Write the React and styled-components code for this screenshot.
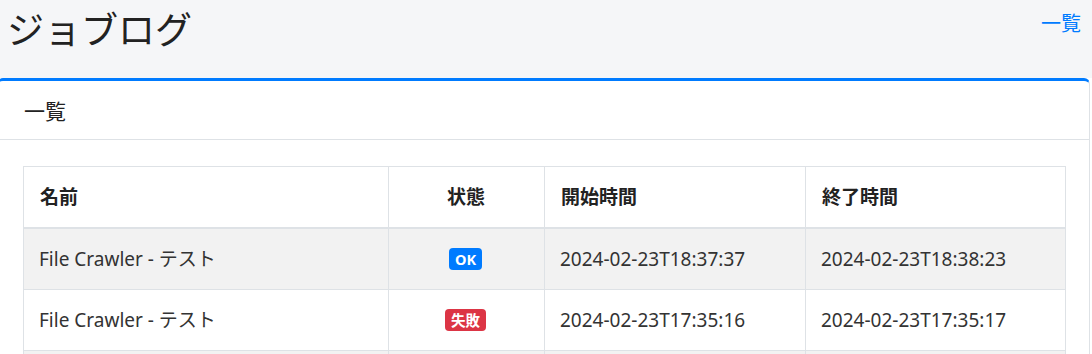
import React from 'react';
import styled, { createGlobalStyle } from 'styled-components';

const GlobalStyle = createGlobalStyle`
    html, body {
        margin: 0;
        padding: 0;
        background: #ffffff;
        font-family: "Noto Sans", "Noto Sans CJK JP", sans-serif;
        color: #212529;
        overflow: hidden;
    }
`;

const Header = styled.header`
    display: flex;
    align-items: flex-start;
    justify-content: space-between;
    height: 78px;
    padding: 0 11px 0 7px;
    box-sizing: border-box;
    background-color: #f5f6f8;
`;

const Title = styled.h1`
    margin: 0;
    padding-top: 2px;
    font-family: "Noto Sans CJK JP", sans-serif;
    font-size: 37px;
    font-weight: 400;
    line-height: 52px;
    color: #222;
`;

const NavLink = styled.a`
    margin-top: 9px;
    font-family: "Noto Sans CJK JP", sans-serif;
    font-size: 20px;
    line-height: 28px;
    color: #007bff;
    text-decoration: none;
`;

const Card = styled.section`
    margin-left: -1px;
    width: 1091px;
    border: 1px solid #dee2e6;
    border-top: 3px solid #007bff;
    border-radius: 4px 6px 0 0;
    background: #fff;
    box-sizing: border-box;
`;

const CardHeader = styled.div`
    height: 58px;
    padding: 0 24px;
    display: flex;
    align-items: center;
    border-bottom: 1px solid #dee2e6;
    font-family: "Noto Sans CJK JP", sans-serif;
    font-size: 21px;
    color: #222;
`;

const CardBody = styled.div`
    padding: 26px 24px 24px 23px;
`;

const Table = styled.table`
    width: 1042px;
    table-layout: fixed;
    border-collapse: collapse;
    font-size: 19px;
`;

const Th = styled.th`
    padding: 16px 17px 16px 16px;
    line-height: 28px;
    border: 1px solid #dee2e6;
    border-bottom-width: 2px;
    font-weight: 700;
    text-align: ${p => p.$center ? 'center' : 'left'};
    color: #222;
`;

const Row = styled.tr`
    background: ${p => p.$striped ? '#f2f2f2' : '#fff'};
`;

const Td = styled.td`
    padding: 16px 17px 16px 15px;
    line-height: 28px;
    border: 1px solid #dee2e6;
    text-align: ${p => p.$center ? 'center' : 'left'};
    color: #333;
    white-space: nowrap;
`;

const Badge = styled.span`
    display: inline-block;
    padding: 3px 6px;
    font-size: 14.5px;
    font-weight: 700;
    line-height: 16px;
    color: #fff;
    border-radius: 4px;
    vertical-align: 1px;
    background-color: ${p => p.$tone === 'danger' ? '#dc3545' : '#007bff'};
`;

const logs = [
    { name: 'File Crawler - テスト', ok: true, start: '2024-02-23T18:37:37', end: '2024-02-23T18:38:23' },
    { name: 'File Crawler - テスト', ok: false, start: '2024-02-23T17:35:16', end: '2024-02-23T17:35:17' },
    { name: 'File Crawler - テスト', ok: true, start: '2024-02-23T16:12:02', end: '2024-02-23T16:12:40' },
];

export default function App() {
    return (
        <>
            <GlobalStyle />
            <Header>
                <Title>ジョブログ</Title>
                <NavLink href="#">一覧</NavLink>
            </Header>
            <Card>
                <CardHeader>一覧</CardHeader>
                <CardBody>
                    <Table>
                        <colgroup>
                            <col style={{ width: 365 }} />
                            <col style={{ width: 156 }} />
                            <col style={{ width: 261 }} />
                            <col style={{ width: 260 }} />
                        </colgroup>
                        <thead>
                            <tr>
                                <Th>名前</Th>
                                <Th $center>状態</Th>
                                <Th>開始時間</Th>
                                <Th>終了時間</Th>
                            </tr>
                        </thead>
                        <tbody>
                            {logs.map((log, i) => (
                                <Row key={i} $striped={i % 2 === 0}>
                                    <Td>{log.name}</Td>
                                    <Td $center>
                                        {log.ok
                                            ? <Badge>OK</Badge>
                                            : <Badge $tone="danger">失敗</Badge>}
                                    </Td>
                                    <Td>{log.start}</Td>
                                    <Td>{log.end}</Td>
                                </Row>
                            ))}
                        </tbody>
                    </Table>
                </CardBody>
            </Card>
        </>
    );
}
